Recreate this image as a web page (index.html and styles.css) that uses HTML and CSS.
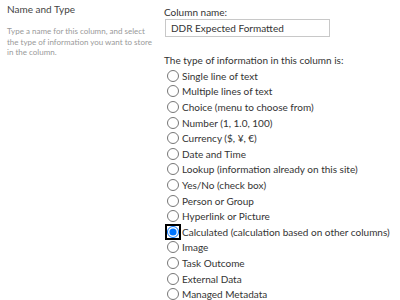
FILE: index.html
```html
<!DOCTYPE html>
<html lang="en">
<head>
    <meta charset="UTF-8">
    <title>Name and Type</title>
    <link rel="stylesheet" href="styles.css">
</head>
<body>
    <div class="section">
        <div class="info">
            <h3>Name and Type</h3>
            <p>Type a name for this column, and select the type of information you want to store in the column.</p>
        </div>
        <div class="fields">
            <label class="lbl" for="colname">Column name:</label>
            <input type="text" id="colname" class="txt" value="DDR Expected Formatted">
            <p class="question">The type of information in this column is:</p>
            <div class="options">
                <label class="opt"><input type="radio" name="tipo">Single line of text</label>
                <label class="opt"><input type="radio" name="tipo">Multiple lines of text</label>
                <label class="opt"><input type="radio" name="tipo">Choice (menu to choose from)</label>
                <label class="opt"><input type="radio" name="tipo">Number (1, 1.0, 100)</label>
                <label class="opt"><input type="radio" name="tipo">Currency ($, ¥, €)</label>
                <label class="opt"><input type="radio" name="tipo">Date and Time</label>
                <label class="opt"><input type="radio" name="tipo">Lookup (information already on this site)</label>
                <label class="opt"><input type="radio" name="tipo">Yes/No (check box)</label>
                <label class="opt"><input type="radio" name="tipo">Person or Group</label>
                <label class="opt"><input type="radio" name="tipo">Hyperlink or Picture</label>
                <label class="opt"><input type="radio" name="tipo" checked class="focused">Calculated (calculation based on other columns)</label>
                <label class="opt"><input type="radio" name="tipo">Image</label>
                <label class="opt"><input type="radio" name="tipo">Task Outcome</label>
                <label class="opt"><input type="radio" name="tipo">External Data</label>
                <label class="opt"><input type="radio" name="tipo">Managed Metadata</label>
            </div>
        </div>
    </div>
</body>
</html>
```

FILE: styles.css
```css
body {
    margin: 0;
    background-color: white;
    font-family: "Lato", "Open Sans", sans-serif;
    color: #333;
}

.section {
    display: flex;
}

.info {
    flex: none;
    width: 150px;
    padding: 1px 7px 0 7px;
}

.info h3 {
    margin: 0;
    font-size: 10px;
    font-weight: normal;
    color: #444;
    line-height: 16px;
}

.info p {
    width: 148px;
    margin: 9px 0 0 0;
    font-size: 8px;
    line-height: 10.7px;
    color: #999;
}

.fields {
    display: flex;
    flex-direction: column;
    padding-top: 6px;
    font-size: 10px;
}

.lbl {
    line-height: 12px;
    color: #333;
}

.txt {
    width: 165px;
    height: 18px;
    margin: 1px 0 0 1px;
    padding: 0 5px;
    box-sizing: border-box;
    border: 1px solid #c8c8c8;
    font-family: inherit;
    font-size: 10px;
    color: #333;
    outline: none;
}

.question {
    margin: 15px 0 0 0;
    line-height: 16px;
}

.options {
    display: flex;
    flex-direction: column;
}

.opt {
    display: flex;
    align-items: center;
    height: 15.6px;
    white-space: nowrap;
}

.opt input {
    width: 12px;
    height: 12px;
    margin: 0 3px 0 3px;
}

.opt input.focused {
    outline: 2px solid black;
    outline-offset: 0;
    border-radius: 50%;
}
```
